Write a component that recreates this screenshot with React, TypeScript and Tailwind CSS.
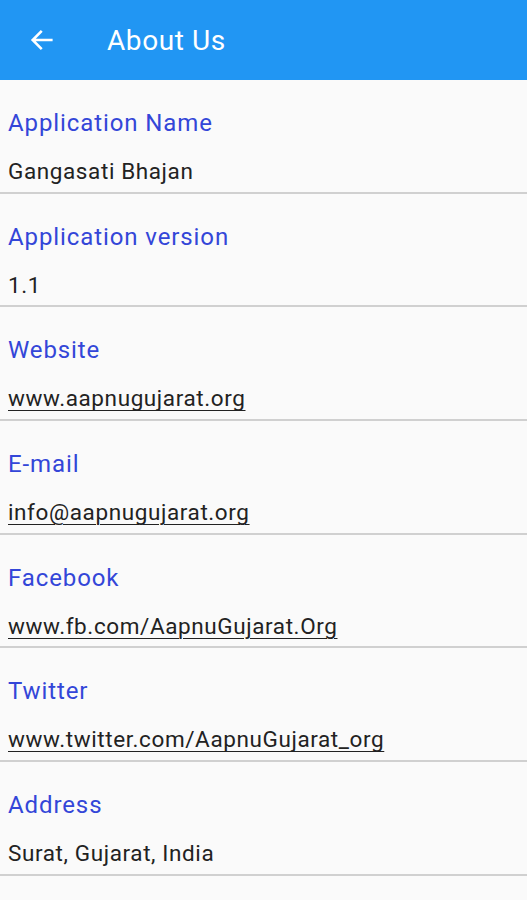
import React from 'react';

const items = [
  { label: 'Application Name', value: 'Gangasati Bhajan', link: false },
  { label: 'Application version', value: '1.1', link: false },
  { label: 'Website', value: 'www.aapnugujarat.org', link: true },
  { label: 'E-mail', value: 'info@aapnugujarat.org', link: true },
  { label: 'Facebook', value: 'www.fb.com/AapnuGujarat.Org', link: true },
  { label: 'Twitter', value: 'www.twitter.com/AapnuGujarat_org', link: true },
  { label: 'Address', value: 'Surat, Gujarat, India', link: false },
];

export default function App() {
  return (
    <div className="w-[527px] h-[900px] bg-[#fafafa] overflow-hidden" style={{ fontFamily: 'Roboto, "Noto Sans", sans-serif' }}>
      <div className="h-[80px] bg-[#2196f3] flex items-center text-white">
        <svg className="ml-[28px] w-[28px] h-[28px]" viewBox="0 0 24 24" fill="none" stroke="currentColor" strokeWidth={2.2} strokeLinecap="square">
          <path d="M20 12H5M11 5l-7 7 7 7" />
        </svg>
        <h1 className="ml-[51px] mt-[2px] text-[28px] leading-none tracking-[0.6px]">About Us</h1>
      </div>

      <div className="flex flex-col">
        {items.map((item) => (
          <div key={item.label} className="h-[113.7px] border-b-2 border-[#d0d0d0] px-[8px] pt-[28px] flex flex-col">
            <span className="text-[24px] leading-[30px] tracking-[0.9px] text-[#3346d8]">{item.label}</span>
            <span className={`mt-[19px] text-[22.5px] leading-[28px] tracking-[0.6px] text-[#222222] ${item.link ? 'underline underline-offset-[4px] decoration-[1px]' : ''}`}>
              {item.value}
            </span>
          </div>
        ))}
      </div>
    </div>
  );
}
